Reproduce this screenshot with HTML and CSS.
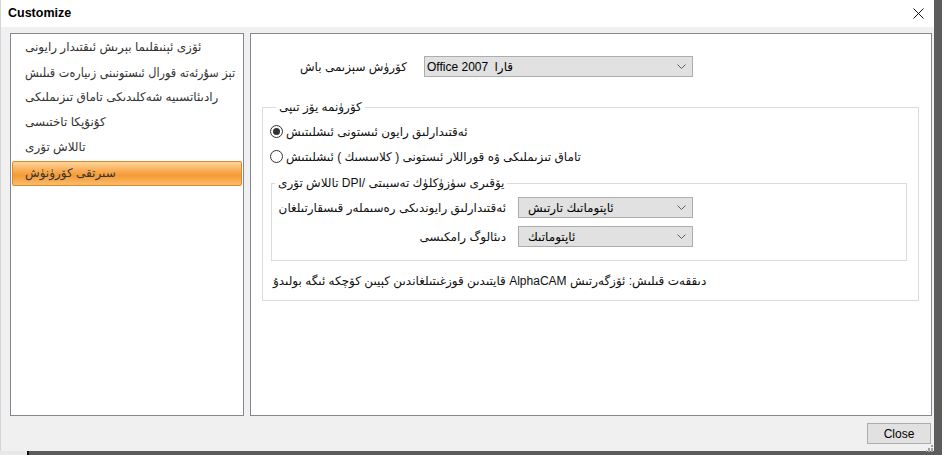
FILE: index.html
```html
<!DOCTYPE html>
<html lang="ug">
<head>
    <meta charset="UTF-8">
    <title>Customize</title>
    <link rel="stylesheet" href="styles.css">
</head>
<body>
    <div class="desk">
        <div class="dialog">
            <div class="titlebar">
                <span class="title">Customize</span>
                <button class="close-x" type="button">
                    <svg width="11" height="11" viewBox="0 0 11 11"><path d="M0.5 0.5 L10.5 10.5 M10.5 0.5 L0.5 10.5" stroke="#111" stroke-width="1" fill="none"/></svg>
                </button>
            </div>
            <div class="content">
                <ul class="nav">
                    <li>ئۆزى ئېنىقلىما بېرىش ئىقتىدار رايونى</li>
                    <li class="tight">تېز سۇرئەتە قورال ئىستونىنى زىيارەت قىلىش</li>
                    <li>رادىئاتسىيە شەكلىدىكى تاماق تىزىملىكى</li>
                    <li>كۇنۇپكا تاختىسى</li>
                    <li>تاللاش تۆرى</li>
                    <li class="active">سىرتقى كۆرۈنۈش</li>
                </ul>
                <div class="page">
                    <div class="scheme-row">
                        <span class="scheme-label">كۆرۈش سېزىمى باش</span>
                        <div class="combo wide">
                            <span class="combo-text">Office 2007 <span class="gap">قارا</span></span>
                            <svg class="chev" width="9" height="5" viewBox="0 0 9 5"><path d="M0.5 0.5 L4.5 4.5 L8.5 0.5" stroke="#606060" fill="none"/></svg>
                        </div>
                    </div>
                    <fieldset class="group look">
                        <legend>كۆرۈنمە يۆز تىپى</legend>
                        <label class="radio"><span class="mark on"></span>ئەقتىدارلىق رايون ئىستونى ئىشلىتىش</label>
                        <label class="radio"><span class="mark"></span>تاماق تىزىملىكى ۋە قوراللار ئىستونى ( كلاسسىك ) ئىشلىتىش</label>
                        <fieldset class="group dpi">
                            <legend>تاللاش تۆرى DPI/ يۆقىرى سۈزۈكلۈك تەسبىتى</legend>
                            <div class="field">
                                <span class="field-label">ئەقتىدارلىق رايوندىكى رەسىملەر قىسقارتىلغان</span>
                                <div class="combo">
                                    <span class="combo-text">ئاپتوماتىك تارتىش</span>
                                    <svg class="chev" width="9" height="5" viewBox="0 0 9 5"><path d="M0.5 0.5 L4.5 4.5 L8.5 0.5" stroke="#606060" fill="none"/></svg>
                                </div>
                            </div>
                            <div class="field">
                                <span class="field-label">دىئالوگ رامكىسى</span>
                                <div class="combo">
                                    <span class="combo-text">ئاپتوماتىك</span>
                                    <svg class="chev" width="9" height="5" viewBox="0 0 9 5"><path d="M0.5 0.5 L4.5 4.5 L8.5 0.5" stroke="#606060" fill="none"/></svg>
                                </div>
                            </div>
                        </fieldset>
                        <p class="note">قايتىدىن قوزغىتىلغاندىن كېيىن كۆچكە ئىگە بولىدۇ AlphaCAM دىققەت قىلىش: ئۆزگەرتىش</p>
                    </fieldset>
                </div>
            </div>
            <div class="footer">
                <button class="close-btn" type="button">Close</button>
                <svg class="grip" width="7" height="7" viewBox="0 0 7 7" fill="#a0a0a0">
                    <rect x="5" y="0" width="2" height="2"/>
                    <rect x="2" y="3" width="2" height="2"/><rect x="5" y="3" width="2" height="2"/>
                    <rect x="-1" y="5" width="2" height="2"/><rect x="2" y="5" width="2" height="2"/><rect x="5" y="5" width="2" height="2"/>
                </svg>
            </div>
        </div>
        <div class="edge"><span class="edge-light"></span></div>
    </div>
</body>
</html>
```

FILE: styles.css
```css
body {
    margin: 0;
    font-family: "Liberation Sans", "DejaVu Sans", sans-serif;
    font-size: 12px;
    line-height: 16px;
    color: #111;
}
.desk {
    width: 942px;
    height: 455px;
    background-color: #5c5c5c;
    overflow: hidden;
}
.dialog {
    width: 934px;
    height: 451px;
    background-color: #f0f0f0;
    border-left: 1px solid #d4d4d4;
    box-sizing: border-box;
    display: flex;
    flex-direction: column;
}
.titlebar {
    height: 27px;
    background-color: #fff;
    display: flex;
    align-items: center;
    justify-content: space-between;
    padding: 0 6px 0 7px;
}
.title {
    font-weight: bold;
    font-size: 12.5px;
    color: #000;
    margin-top: -2px;
}
.close-x {
    border: none;
    background: none;
    padding: 0;
    width: 11px;
    height: 11px;
    margin-right: 4px;
    margin-top: -1px;
    display: flex;
}
.content {
    display: flex;
    gap: 6px;
    padding: 6px 2px 0 9px;
}
.nav {
    list-style: none;
    margin: 0;
    padding: 1px 1px;
    width: 234px;
    height: 383px;
    box-sizing: border-box;
    background-color: #fff;
    border: 1px solid #828790;
    overflow: hidden;
}
.nav li {
    height: 25px;
    line-height: 25px;
    padding-left: 13px;
    color: #333;
    white-space: nowrap;
}
.nav li.tight {
    font-family: "DejaVu Sans Condensed", sans-serif;
    font-size: 12.5px;
}
.nav li.active {
    height: 23px;
    line-height: 23px;
    margin-top: 1px;
    border: 1px solid #d98b2b;
    border-radius: 2px;
    background: linear-gradient(#fdd49a, #f8a548 45%, #f59a35 60%, #fbbd6c);
    padding-left: 12px;
}
.page {
    width: 682px;
    height: 383px;
    box-sizing: border-box;
    background-color: #fff;
    border: 1px solid #828790;
}
.scheme-row {
    display: flex;
    align-items: center;
    margin-top: 22px;
}
.scheme-label {
    width: 156px;
    text-align: right;
    margin-right: 17px;
}
.combo {
    width: 175px;
    height: 21px;
    box-sizing: border-box;
    background-color: #e1e1e1;
    border: 1px solid #adadad;
    display: flex;
    align-items: center;
    justify-content: space-between;
    padding: 0 6px 0 9px;
}
.combo.wide {
    width: 269px;
    padding-left: 2px;
}
.combo-text {
    color: #000;
    white-space: nowrap;
}
.gap {
    margin-left: 3px;
}
.group {
    margin: 0;
    border: 1px solid #dcdcdc;
}
.group legend {
    padding: 0 3px;
    white-space: nowrap;
}
.look {
    margin: 22px 12px 0 11px;
    padding: 4px 10px 11px 7px;
}
.look legend {
    margin-left: 6px;
}
.radio {
    display: flex;
    align-items: center;
    height: 25px;
    white-space: nowrap;
}
.mark {
    width: 11px;
    height: 11px;
    border: 1px solid #333;
    border-radius: 50%;
    margin-right: 3px;
    position: relative;
    background-color: #fff;
}
.mark.on::after {
    content: "";
    position: absolute;
    left: 2px;
    top: 2px;
    width: 7px;
    height: 7px;
    border-radius: 50%;
    background-color: #333;
}
.dpi {
    margin: 6px 1px 0 1px;
    padding: 2px 8px 13px 0;
}
.dpi legend {
    margin-left: 3px;
}
.field {
    display: flex;
    align-items: center;
    margin-top: 8px;
}
.field:first-of-type {
    margin-top: 4px;
}
.field-label {
    width: 234px;
    text-align: right;
    margin-right: 12px;
    white-space: nowrap;
}
.note {
    margin: 12px 0 0 3px;
    white-space: nowrap;
}
.footer {
    position: relative;
    display: flex;
    justify-content: flex-end;
    padding: 7px 0 0 0;
}
.close-btn {
    width: 64px;
    height: 21px;
    background-color: #e1e1e1;
    border: 1px solid #adadad;
    font-family: "Liberation Sans", sans-serif;
    font-size: 12px;
    color: #000;
    padding: 0;
    margin-right: 3px;
}
.grip {
    position: absolute;
    right: 1px;
    bottom: -8px;
}
.edge {
    height: 4px;
    display: flex;
}
.edge-light {
    width: 27px;
    background-color: #e8e8e8;
    border-right: 2px solid #111;
}
```
